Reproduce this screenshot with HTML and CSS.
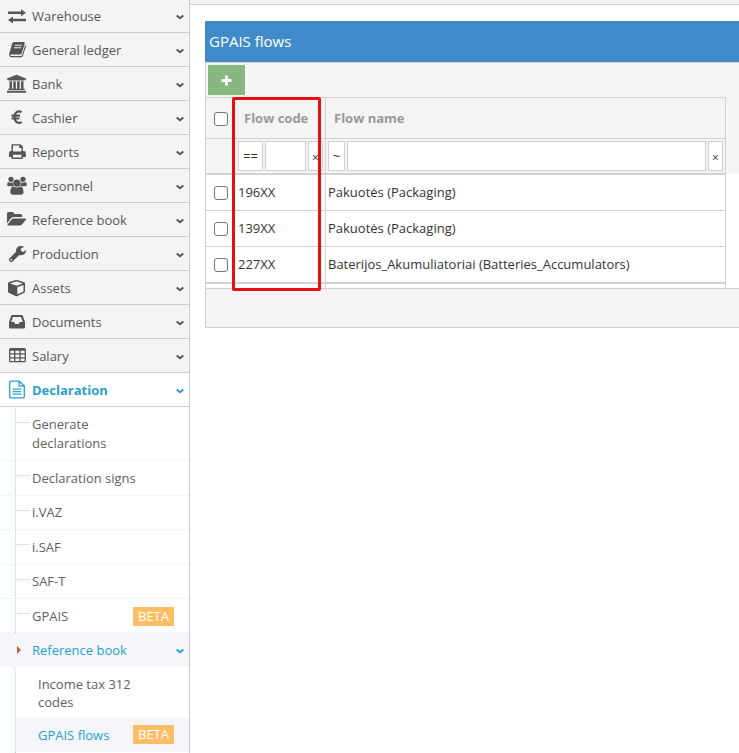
FILE: index.html
```html
<!DOCTYPE html>
<html lang="en">
<head>
<meta charset="utf-8">
<title>GPAIS flows</title>
<link rel="stylesheet" href="styles.css">
</head>
<body>
<svg class="defs" aria-hidden="true">
  <symbol id="chev" viewBox="0 0 8 6"><path d="M.7 1.400 4 4.200 7.300 1.400" fill="none" stroke="currentColor" stroke-width="2"/></symbol>
</svg>
<div class="app">
  <nav class="sidebar">
    <a class="item"><svg class="ico" viewBox="0 0 20 20"><path d="M1 5.500h13V3.200l5 3.600-5 3.500V8H1zM19 12.700H6v-2.200l-5 3.600 5 3.500v-2.300h13z"/></svg><span>Warehouse</span><svg class="chev"><use href="#chev"/></svg></a>
    <a class="item"><svg class="ico" viewBox="0 0 20 20"><path fill-rule="evenodd" d="M7.200 2h9.600q1.300.1 1 1.500L14.600 13.500q-.4 1.100-1.600 1.100H4.200q-1.200.1-.9.9.2.5 1 .5h9.700q.7 0 1-.8L18.200 5q1 .5.700 1.700L15.800 16q-.5 1.300-1.800 1.300H4.300Q1.900 17 2 14.500L5 4q.6-1.900 2.200-2zM8 4.700l-.4 1.100h7l.4-1.100zM7.200 7.200l-.4 1.100h7l.4-1.100z"/></svg><span>General ledger</span><svg class="chev"><use href="#chev"/></svg></a>
    <a class="item"><svg class="ico" viewBox="0 0 20 20"><path d="M9.500.7 19 4.500v1.200h-1.300v.7H1.300v-.7H0V4.500zM2.500 7.200H5v7.500h1.300V7.200h2.500v7.500h1.400V7.200h2.500v7.500H14V7.200h2.500v7.500h1.200v1.200H1.300v-1.200h1.200zM0 16.800h19v1.900H0z"/></svg><span>Bank</span><svg class="chev"><use href="#chev"/></svg></a>
    <a class="item"><svg class="ico" viewBox="0 0 20 20"><path d="M14.500 4.200C10.700 1.900 7.500 4.500 7.500 9s3.500 7.500 7.300 5.100M4.500 7.700h8.500M4.500 10.500h8" fill="none" stroke="currentColor" stroke-width="2.200"/></svg><span>Cashier</span><svg class="chev"><use href="#chev"/></svg></a>
    <a class="item"><svg class="ico" viewBox="0 0 20 20"><path fill-rule="evenodd" d="M4.500 2.200h9l2.400 2.400v4.300h1q1.800.2 1.900 2v4.200h-2.900V17H4.500v-1.900H2v-4.200q.1-1.800 1.900-2h.6zM6 3.600v5.900h8.500V6h-2.300V3.600zM6 12.700v2.900h8.500v-2.900z"/></svg><span>Reports</span><svg class="chev"><use href="#chev"/></svg></a>
    <a class="item"><svg class="ico" viewBox="0 0 20 20"><circle cx="4" cy="3.300" r="2.600"/><circle cx="16" cy="3.300" r="2.600"/><path d="M1.300 6q2.700 1.400 4.700.5-.3 2 .9 3.800H2.200Q0 10.300.1 8.400.2 6.500 1.300 6zM18.500 6q-2.700 1.400-4.700.5.300 2-.9 3.800h4.700q2.300 0 2.200-1.900Q19.700 6.500 18.500 6z"/><circle cx="9.900" cy="7.100" r="3.700"/><path d="M6.600 10.400q3.300 2.100 6.600 0 3.300.4 3.300 5.600 0 2.700-2.700 2.700H6q-2.700 0-2.700-2.700 0-5.200 3.300-5.600z"/></svg><span>Personnel</span><svg class="chev"><use href="#chev"/></svg></a>
    <a class="item"><svg class="ico" viewBox="0 0 20 20"><path d="M0 13.500V3.500Q.1 2.100 1.500 2h4Q7 2.100 7 3.500V4h6.500q1.600.1 1.600 1.600v1.500H6.500q-1.700.1-2.900 1.300zM6.500 8.500h12.200q.8.200.4.900l-3.900 4.900q-1 1.200-2.500 1.200H.9q-1-.1-.3-1.100l3.700-4.700q.8-1 2.200-1.200z"/></svg><span>Reference book</span><svg class="chev"><use href="#chev"/></svg></a>
    <a class="item"><svg class="ico" viewBox="0 0 20 20"><path fill-rule="evenodd" d="M16.800 2.900 14 4.500v2.200l2 1.200 2.700-1.600q.4 0 .4.500-1 4.500-5 4.500-1 0-1.800-.4L5.500 17.500q-1.200 1.200-2.400 0l-.8-.8q-1-1 .1-2.300L9.100 7.800C8.500 4.500 10.800 2 14 2q1.600 0 2.800.5zM4.200 14.800a.8.800 0 1 0 .1 0z"/></svg><span>Production</span><svg class="chev"><use href="#chev"/></svg></a>
    <a class="item"><svg class="ico" viewBox="0 0 20 20"><path fill-rule="evenodd" d="M9.500 1.700 17.200 4.300q.8.400.8 1.200v8.100q0 .8-.7 1.200l-7.100 3.400q-.7.300-1.300 0l-7.200-3.400q-.7-.4-.7-1.200V5.500q0-.8.8-1.200zM9.500 3.200 3.200 5.500l6.300 2.300 6.300-2.300zM10.300 9.200v7.200l6.200-3V6.900z"/></svg><span>Assets</span><svg class="chev"><use href="#chev"/></svg></a>
    <a class="item"><svg class="ico" viewBox="0 0 20 20"><path fill-rule="evenodd" d="M5.300 3h9.400q.8.100 1.100.8L18 9.900v5.600q0 .8-.9.900H2.900q-.8-.1-.9-.9V9.900l2.200-6.100q.3-.7 1.100-.8zM6 5 4.200 10h3l.9 2h3.800l.9-2h3L14 5z"/></svg><span>Documents</span><svg class="chev"><use href="#chev"/></svg></a>
    <a class="item"><svg class="ico" viewBox="0 0 20 20"><path d="M2.700 3.700v11q0 1 1 1h13.600q1 0 1-1v-11q0-1-1-1H3.700q-1 0-1 1zM2.700 4h15.600M2.700 7.800h15.600M2.700 11.800h15.600M7.700 4v11.700M13.100 4v11.700" fill="none" stroke="currentColor" stroke-width="1.300"/></svg><span>Salary</span><svg class="chev"><use href="#chev"/></svg></a>
    <a class="item active"><svg class="ico" viewBox="0 0 20 20"><path d="M3.500 1.200h8.700L17.300 6v11q0 .8-.8.800h-13q-.8 0-.8-.8V2q0-.8.800-.8zM12 1.500v4.700h5M5.800 9.200h8.400M5.800 11.700h8.400M5.800 14.200h8.400" fill="none" stroke="currentColor" stroke-width="1.300"/></svg><span>Declaration</span><svg class="chev"><use href="#chev"/></svg></a>
    <div class="submenu">
      <a class="sub first"><span>Generate declarations</span></a>
      <a class="sub h35"><span>Declaration signs</span></a>
      <a class="sub up"><span>i.VAZ</span></a>
      <a class="sub h35"><span>i.SAF</span></a>
      <a class="sub up"><span>SAF-T</span></a>
      <a class="sub"><span>GPAIS</span><b class="beta low">BETA</b></a>
      <a class="sub open"><span>Reference book</span><svg class="chev"><use href="#chev"/></svg></a>
      <a class="leaf tall"><span>Income tax 312 codes</span></a>
      <a class="leaf current"><span>GPAIS flows</span><b class="beta">BETA</b></a>
    </div>
  </nav>
  <main class="main">
    <div class="topbar"></div>
    <section class="panel">
      <h1>GPAIS flows</h1>
      <div class="body">
        <div class="toolbar"><button class="add" aria-label="Add"><svg viewBox="0 0 11 11"><path d="M4 .5h3V4h3.500v3H7v3.500H4V7H.5V4H4z" fill="#fff"/></svg></button></div>
        <div class="headzone">
          <div class="grid headings"><div class="c"><i class="box"></i></div><div class="c code">Flow code</div><div class="c name">Flow name</div></div>
          <div class="grid filters">
            <div class="c"></div>
            <div class="c"><div class="f op">==</div><div class="f val"></div><div class="f clr">×</div></div>
            <div class="c"><div class="f tilde">~</div><div class="f grow"></div><div class="f clr">×</div></div>
          </div>
        </div>
        <div class="rows">
          <div class="grid row"><div class="c"><i class="box"></i></div><div class="c">196XX</div><div class="c">Pakuotės (Packaging)</div></div>
          <div class="grid row"><div class="c"><i class="box"></i></div><div class="c">139XX</div><div class="c">Pakuotės (Packaging)</div></div>
          <div class="grid row last"><div class="c"><i class="box"></i></div><div class="c">227XX</div><div class="c">Baterijos_Akumuliatoriai (Batteries_Accumulators)</div></div>
          <div class="grid spare"><div class="c"></div><div class="c"></div><div class="c"></div></div>
        </div>
        <div class="footer"></div>
        <div class="marker"></div>
      </div>
    </section>
  </main>
</div>
</body>
</html>
```
FILE: styles.css
```css
* { box-sizing: border-box; }
body { margin: 0; background: #fff; font: 13px/18px "Open Sans", sans-serif; color: #333; overflow: hidden; }
.defs { position: absolute; width: 0; height: 0; }
.app { display: flex; height: 753px; overflow: hidden; }

.sidebar { width: 190px; flex: none; border-right: 1px solid #ccc; color: #585858; }
.item { display: flex; align-items: center; height: 34px; padding: 0 5px 0 7px; background: #f4f4f4; border-bottom: 1px solid #ccc; }
.item:first-child { height: 33px; }
.ico { width: 20px; height: 20px; margin-right: 5px; fill: #555; color: #555; flex: none; }
.item span { flex: 1; }
.chev { width: 8px; height: 6px; flex: none; position: relative; top: 1px; }
.item.active { background: #fff; color: #2a9fd0; font-weight: 700; }
.active .ico { color: #2a9fd0; }

.submenu { position: relative; height: 360px; }
.submenu::before { content: ""; position: absolute; left: 15px; top: 1px; bottom: 0; border-left: 1px dotted #b5d0e8; }
.sub { position: relative; display: flex; align-items: center; height: 34px; padding: 0 5px 0 32px; border-bottom: 1px dotted #ececec; color: #616161; }
.sub::before { content: ""; position: absolute; left: 16px; top: 14px; width: 13px; border-top: 1px dotted #b5d0e8; }
.sub.h35 { height: 35px; }
.sub.up { padding-bottom: 2px; }
.sub.first { height: 54px; padding-right: 70px; line-height: 19px; }
.sub.first::before { top: 15px; }
.beta { margin-left: auto; margin-right: 10px; width: 41px; height: 19px; background: #ffbe66; color: #fff; text-align: center; font-weight: 400; line-height: 19px; }
.beta.low { margin-top: 1px; }
.sub.open { background: #f4f6fa; color: #2a9fd0; border-bottom: 0; }
.sub.open span { flex: 1; }
.sub.open::before { left: 17px; top: 13px; width: 0; border: 4px solid transparent; border-left-color: #c0643c; border-right-width: 0; }
.leaf { display: flex; align-items: center; height: 35px; margin-left: 16px; padding: 0 5px 0 22px; color: #616161; }
.leaf.tall { height: 51px; padding-right: 50px; }
.leaf.current { height: 34px; padding-bottom: 1px; background: #f4f6fa; color: #2a9fd0; }

.main { flex: 1; min-width: 0; }
.topbar { height: 5px; background: #f4f4f4; border-bottom: 1px solid #ccc; }
.panel { margin: 16px 0 0 15px; }
h1 { margin: 0; height: 41px; padding-left: 4px; background: #428bca; color: #fff; font-size: 15px; font-weight: 400; line-height: 41px; }
.body { position: relative; border-left: 1px solid #d2d2d2; border-top: 1px solid #d2d2d2; }
.toolbar { height: 34px; padding: 2px; background: #f4f4f4; }
.add { display: flex; align-items: center; justify-content: center; width: 37px; height: 30px; padding: 0; border: 0; background: #87b87f; }
.add svg { width: 11px; height: 11px; }
.headzone { background: #f4f4f4; }
.grid { display: grid; grid-template-columns: 29px 91px 400px; width: 520px; }
.c { display: flex; align-items: center; padding: 0 3px; border-right: 1px solid #d2d2d2; white-space: nowrap; }
.c:nth-child(1) { padding-left: 8px; }
.headings { height: 42px; border-top: 1px solid #d2d2d2; border-bottom: 1px solid #d2d2d2; color: #999; font-weight: 700; }
.headings .code { padding-left: 9px; }
.headings .name { padding-left: 8px; }
.box { width: 14px; height: 14px; flex: none; border: 1px solid #767676; border-radius: 3px; background: #fff; position: relative; top: 1px; }
.filters { height: 34px; }
.filters .c { padding: 2px; gap: 2px; }
.filters .c + .c { padding-left: 3px; }
.filters .c + .c + .c { padding-left: 2px; }
.f { height: 30px; border: 1px solid #d0d0d0; background: #fff; text-align: center; line-height: 28px; }
.op { width: 25px; }
.val { width: 41px; }
.clr { width: 15px; flex: none; font-size: 12px; line-height: 32px; }
.tilde { width: 17px; }
.grow { flex: 1; }
.rows { border-top: 2px solid #d2d2d2; width: 520px; }
.row { height: 36px; border-bottom: 1px solid #d2d2d2; }
.row .c { padding-bottom: 2px; }
.row .c + .c + .c { padding-left: 2px; }
.row.last { height: 37px; border-bottom-width: 2px; }
.spare { height: 4px; }
.footer { height: 40px; background: #f4f4f4; border-top: 1px solid #d2d2d2; border-bottom: 1px solid #d2d2d2; }
.marker { position: absolute; left: 26px; top: 34px; width: 89px; height: 194px; border: 3px solid #e90c10; border-radius: 2px; }
```
